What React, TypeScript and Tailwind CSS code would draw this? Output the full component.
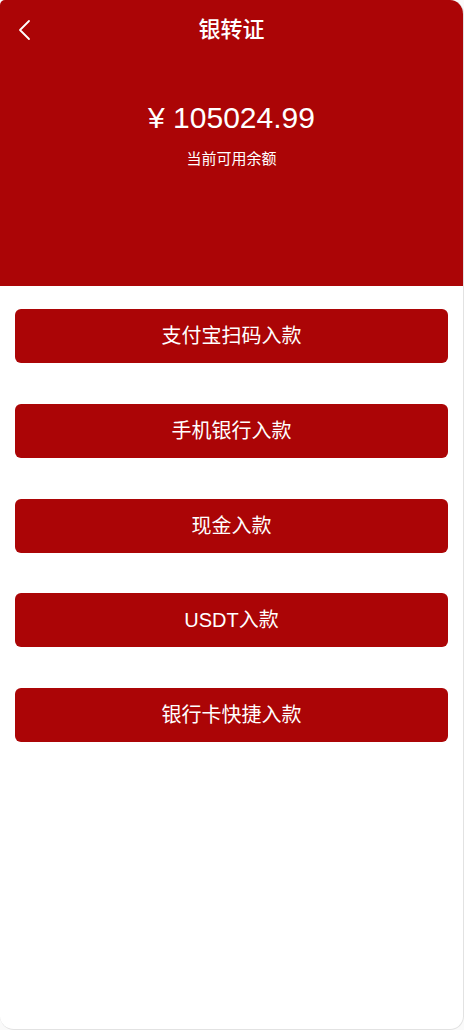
import React from "react";

const buttons = ["支付宝扫码入款", "手机银行入款", "现金入款", "USDT入款", "银行卡快捷入款"];

export default function App() {
  return (
    <div className="w-[464px] h-[1030px] bg-[#fafafa]" style={{ fontFamily: '"Liberation Sans", "Noto Sans CJK SC", sans-serif' }}>
      <div className="w-[464px] h-[1030px] bg-white rounded-tl-[5px] rounded-tr-[14px] rounded-b-[14px] border-r border-b border-[#e2e2e2] overflow-hidden flex flex-col">
        <div className="h-[286px] bg-[#ab0506] flex flex-col items-center text-white">
          <div className="relative w-full h-[60px] flex items-center justify-center">
            <svg className="absolute left-[17px] top-[19px]" width="14" height="22" viewBox="0 0 14 22" fill="none">
              <path d="M12 2 L3 11 L12 20" stroke="white" strokeWidth="1.8" strokeLinecap="round" strokeLinejoin="round" />
            </svg>
            <span className="text-[22px] leading-none font-medium">银转证</span>
          </div>
          <div className="mt-[43px] text-[30px] leading-none">¥ 105024.99</div>
          <div className="mt-[18px] text-[15px] leading-none">当前可用余额</div>
        </div>
        <div className="flex flex-col gap-[40.75px] px-[15px] pt-[23px]">
          {buttons.map((b) => (
            <div key={b} className="h-[54px] rounded-[6px] bg-[#ab0506] text-white text-[20px] flex items-center justify-center">
              {b}
            </div>
          ))}
        </div>
      </div>
    </div>
  );
}
